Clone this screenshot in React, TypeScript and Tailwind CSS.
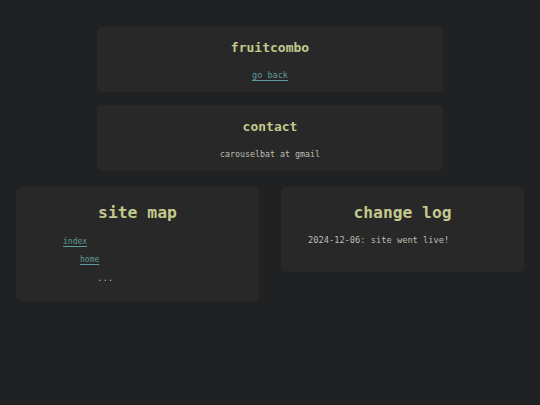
const mono = "font-['DejaVu_Sans_Mono','Liberation_Mono',monospace]";

const Card = ({ children, className = "" }: { children: React.ReactNode; className?: string }) => (
  <div className={`bg-[#282828] rounded-[5px] ${className}`}>{children}</div>
);

export default function App() {
  return (
    <div className={`min-h-[405px] bg-[#202122] ${mono} pt-[27px] px-4`}>
      <div className="w-[346px] mx-auto flex flex-col gap-[13px]">
        <Card className="pt-[13px] pb-[11px] text-center">
          <h1 className="text-[13px] leading-4 font-bold text-[#c3c88c]">fruitcombo</h1>
          <a href="#" className="block mt-[13px] text-[8.5px] leading-3 text-[#5f9a98] underline underline-offset-2">
            go back
          </a>
        </Card>
        <Card className="pt-[14px] pb-[11px] text-center">
          <h2 className="text-[13px] leading-4 font-bold text-[#c3c88c]">contact</h2>
          <p className="mt-[13px] text-[8.3px] leading-3 text-[#bdbdb2]">carouselbat at gmail</p>
        </Card>
      </div>
      <div className="mt-4 grid grid-cols-2 gap-[22px] items-start">
        <Card className="pt-[16px] pb-[14px]">
          <h2 className="text-center text-[16.4px] leading-5 font-bold text-[#c3c88c]">site map</h2>
          <ul className="mt-[10px] pl-[47px] text-[8px] leading-[18px]">
            <li>
              <a href="#" className="text-[#5f9a98] underline underline-offset-2">index</a>
              <ul className="pl-[17px]">
                <li>
                  <a href="#" className="text-[#5f9a98] underline underline-offset-2">home</a>
                  <ul className="pl-[17px]">
                    <li className="text-[9px] text-[#bdbdb2]">...</li>
                  </ul>
                </li>
              </ul>
            </li>
          </ul>
        </Card>
        <Card className="pt-[16px] pb-[24px]">
          <h2 className="text-center text-[16.3px] leading-5 font-bold text-[#c3c88c]">change log</h2>
          <p className="mt-[9px] pl-[27px] text-[8.7px] leading-4 text-[#bdbdb2]">2024-12-06: site went live!</p>
        </Card>
      </div>
    </div>
  );
}
